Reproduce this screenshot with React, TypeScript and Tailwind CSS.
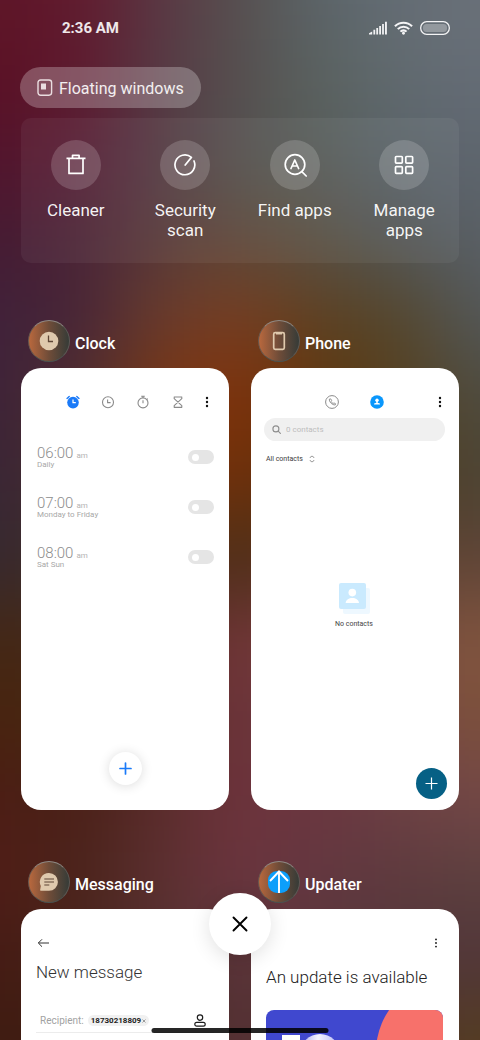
import type { ReactNode } from "react";

/* Wallpaper colour field: one row of samples every 80 units, seven across. */
const wallpaperRows: string[][] = [
  ["#5e1628", "#621a2e", "#5a3844", "#56504f", "#5b656a", "#656d75", "#6a7179"],
  ["#5a1024", "#5f1a2f", "#563944", "#55504f", "#5a625f", "#606a6f", "#656c76"],
  ["#52142c", "#581e37", "#523b44", "#54524f", "#575d5a", "#5a636a", "#5e656e"],
  ["#451a32", "#4b2537", "#583a3a", "#5e4838", "#595044", "#525758", "#5a6066"],
  ["#40223a", "#472538", "#6a3c2c", "#783d20", "#5c4020", "#54462c", "#535758"],
  ["#3d2238", "#50302f", "#7a3610", "#80300a", "#5f370c", "#56401f", "#4e4b3e"],
  ["#392636", "#4a2c2a", "#6a300f", "#72300a", "#55300f", "#503c20", "#4c4434"],
  ["#362a30", "#3f2c28", "#4c2e1c", "#4c2e18", "#54341c", "#5c4030", "#604538"],
  ["#452814", "#45281a", "#5a3028", "#74353a", "#744038", "#7c4c3e", "#82563f"],
  ["#48240f", "#48260f", "#5a2e26", "#6c333b", "#6c3a3e", "#784a3e", "#7c503c"],
  ["#4c1d15", "#4a2018", "#5a2c2c", "#6e333c", "#6a3540", "#6c4044", "#734748"],
  ["#501d17", "#4b241b", "#5c3031", "#6b353f", "#623840", "#5d3a3e", "#5c403e"],
  ["#451b14", "#46241a", "#523030", "#5a3439", "#58343a", "#54363a", "#50363a"],
  ["#3f1b10", "#402014", "#4c2c28", "#543034", "#543430", "#543a28", "#543c20"],
];

function Wallpaper() {
  return (
    <svg
      className="h-full w-full [grid-area:1/1]"
      viewBox="0 0 480 1040"
      preserveAspectRatio="none"
      aria-hidden="true"
    >
      <defs>
        <filter
          id="soft"
          filterUnits="userSpaceOnUse"
          x="-160"
          y="-160"
          width="800"
          height="1360"
          colorInterpolationFilters="sRGB"
        >
          <feGaussianBlur stdDeviation="38" />
        </filter>
      </defs>
      <g filter="url(#soft)">
        {wallpaperRows.map((row, r) =>
          row.map((fill, c) => {
            const left = c === 0 ? -160 : c * 80 - 40;
            const right = c === 6 ? 640 : c * 80 + 41;
            const top = r === 0 ? -160 : r * 80 - 40;
            const bottom = r === 13 ? 1200 : r * 80 + 41;
            return (
              <rect key={`${r}-${c}`} x={left} y={top} width={right - left} height={bottom - top} fill={fill} />
            );
          })
        )}
      </g>
    </svg>
  );
}

function StatusBar() {
  return (
    <header className="flex h-14 items-center justify-between pr-[9px] pl-[41px] text-white">
      <time className="text-[15px] font-bold text-white/90">2:36 AM</time>
      <div className="flex items-center gap-[7px]">
        <svg width="18" height="14" viewBox="0 0 18 14" fill="#f1f1f3" role="img" aria-label="Signal">
          <path d="M0 13.5V12.300l3.200-1.700v2.900zM4.400 8.800h1.800v4.700H4.400zM7.300 7h1.800v6.500H7.300zM10.200 5H12v8.500h-1.800zM13.100 3h1.800v10.500h-1.800zM16 .8h1.900v12.700H16z" />
        </svg>
        <svg width="19" height="14" viewBox="0 0 20 14" fill="none" stroke="#f4f4f5" strokeWidth="2.200" role="img" aria-label="Wi-Fi">
          <path d="M1 5.200a12.600 12.600 0 0 1 18 0" />
          <path d="M4 8.200a8.400 8.400 0 0 1 12 0" />
          <path d="M6.800 10.800a4.500 4.500 0 0 1 6.400 0" />
          <circle cx="10" cy="12.500" r="1.500" fill="#f4f4f5" stroke="none" />
        </svg>
        <svg width="30" height="14" viewBox="0 0 30 14" role="img" aria-label="Battery">
          <rect x=".7" y=".7" width="28.600" height="12.600" rx="6" fill="none" stroke="#f4f4f5" strokeWidth="1.300" />
          <rect x="3" y="3" width="24" height="8" rx="3.500" fill="#fff" opacity=".3" />
        </svg>
      </div>
    </header>
  );
}

function Tool({ label, children }: { label: string; children: ReactNode }) {
  return (
    <button className="flex flex-col items-center gap-2.5 px-4 text-[17px] leading-5 text-white/95">
      <span className="flex h-[50px] w-[50px] items-center justify-center rounded-full bg-white/17">
        <svg width="24" height="24" viewBox="0 0 24 24" fill="none" stroke="#fff" strokeWidth="1.700" aria-hidden="true">
          {children}
        </svg>
      </span>
      <span>{label}</span>
    </button>
  );
}

function Tools() {
  return (
    <nav className="grid h-[145px] grid-cols-4 items-start rounded-[10px] bg-white/5 pt-[22px]">
      <Tool label="Cleaner">
        <path d="M2.500 5.400h19M5 5.800v14.600h14V5.800M8.500 5V2.400h6.600V5" strokeLinejoin="round" />
      </Tool>
      <Tool label="Security scan">
        <path d="M21 8a9.900 9.900 0 1 1-2.600-3.600L12.200 12" strokeLinecap="round" strokeLinejoin="round" />
      </Tool>
      <Tool label="Find apps">
        <circle cx="12" cy="11.500" r="9.800" />
        <path d="m8 15.500 3.800-8.500 3.800 8.500M9.400 13h4.800M18.800 18.600l4.400 4.400" strokeLinecap="round" strokeLinejoin="round" />
      </Tool>
      <Tool label="Manage apps">
        <rect x="3.500" y="3.500" width="6.800" height="6.600" rx=".8" />
        <rect x="13.800" y="3.500" width="6.800" height="6.600" rx=".8" />
        <rect x="3.500" y="13.700" width="6.800" height="6.600" rx=".8" />
        <rect x="13.800" y="13.700" width="6.800" height="6.600" rx=".8" />
      </Tool>
    </nav>
  );
}

function AppWindow({ name, icon, children }: { name: string; icon: ReactNode; children: ReactNode }) {
  return (
    <section className="flex min-w-0 flex-col gap-1.5">
      <h2 className="flex items-center gap-[5px] pl-[7px] text-base font-medium text-white">
        <span className="flex h-[42px] w-[42px] items-center justify-center rounded-full border border-t-[#8f8984] border-r-[#5c5a56] border-b-[#4b5350] border-l-[#6a5a50] bg-linear-to-r from-[#b9683d] via-[#6f4c38] to-[#363b37]">
          <svg width="24" height="24" viewBox="0 0 24 24" aria-hidden="true">
            {icon}
          </svg>
        </span>
        <span className="pt-1.5">{name}</span>
      </h2>
      <div className="flex h-[442px] flex-col overflow-hidden rounded-[20px] bg-white">{children}</div>
    </section>
  );
}

function MoreButton({ small = false }: { small?: boolean }) {
  return (
    <button aria-label="More options">
      <svg width="6" height="14" viewBox="0 0 6 14" fill="#111" aria-hidden="true">
        <circle cx="3" cy={small ? 3.4 : 3} r={small ? 0.9 : 1.2} />
        <circle cx="3" cy="7" r={small ? 0.9 : 1.2} />
        <circle cx="3" cy={small ? 10.6 : 11} r={small ? 0.9 : 1.2} />
      </svg>
    </button>
  );
}

const alarms = [
  { time: "06:00", repeat: "Daily" },
  { time: "07:00", repeat: "Monday to Friday" },
  { time: "08:00", repeat: "Sat Sun" },
];

function ClockScreen() {
  return (
    <>
      <div className="mt-5 flex h-7 items-center justify-end gap-[19px] pr-[19px]">
        <div className="flex gap-[21px]">
          <button aria-label="Alarm">
            <svg width="14" height="14" viewBox="0 0 14 14" aria-hidden="true">
              <circle cx="7" cy="7.600" r="5.800" fill="#1a7af8" />
              <path d="M1 3.400 3.200 1.400M13 3.400l-2.200-2" stroke="#1a7af8" strokeWidth="1.400" strokeLinecap="round" />
              <path d="M7 4.600v3h2.800" fill="none" stroke="#fff" strokeWidth="1.200" />
            </svg>
          </button>
          <button aria-label="World clock">
            <svg width="14" height="14" viewBox="0 0 14 14" fill="none" stroke="#8a8a8a" strokeWidth="1.100" aria-hidden="true">
              <circle cx="7" cy="7.300" r="5.500" />
              <path d="M6.600 4.400v3.200h3" />
            </svg>
          </button>
          <button aria-label="Stopwatch">
            <svg width="14" height="14" viewBox="0 0 14 14" fill="none" stroke="#8a8a8a" strokeWidth="1.100" aria-hidden="true">
              <circle cx="7" cy="7.900" r="5" />
              <path d="M5.200 1.200h3.600M7 1.200V3M7 5.300v3M11 3.600l.8.8" />
            </svg>
          </button>
          <button aria-label="Timer">
            <svg width="14" height="14" viewBox="0 0 14 14" fill="none" stroke="#8a8a8a" strokeWidth="1.100" strokeLinejoin="round" aria-hidden="true">
              <path d="M2.800 2h8.400M2.800 12.400h8.400M3.200 2.200v1.500l7.600 7v1.500M10.800 2.200v1.500l-7.600 7v1.500" />
            </svg>
          </button>
        </div>
        <MoreButton />
      </div>
      <ul className="mt-4">
        {alarms.map((alarm) => (
          <li key={alarm.time}>
            <label className="flex h-[50px] items-center justify-between pr-[15px] pl-4 text-[8px] text-[#b3b3b3]">
              <span>
                <span className="flex h-4 items-baseline gap-[3px]">
                  <span className="text-[15px] leading-4 font-light text-[#8c8c8c]">{alarm.time}</span>
                  <span className="leading-2">am</span>
                </span>
                <span className="block leading-2 text-[#a8a8a8]">{alarm.repeat}</span>
              </span>
              <input
                type="checkbox"
                className="flex h-3.5 w-[26px] appearance-none items-center rounded-full bg-[#e5e5e5] pl-1 before:h-[7px] before:w-[7px] before:rounded-full before:bg-white checked:bg-[#1a7af8] checked:before:ml-[11px]"
              />
            </label>
          </li>
        ))}
      </ul>
      <button
        aria-label="Add alarm"
        className="mt-auto mb-[25px] flex h-[33px] w-[33px] items-center justify-center self-center rounded-full bg-white shadow-[0_1px_12px_rgba(0,0,0,0.14)]"
      >
        <svg width="13" height="13" viewBox="0 0 13 13" stroke="#1a7af8" strokeWidth="1.700" strokeLinecap="round" aria-hidden="true">
          <path d="M6.500 1v11M1 6.500h11" />
        </svg>
      </button>
    </>
  );
}

function PhoneScreen() {
  return (
    <>
      <div className="mt-5 flex h-7 items-center justify-end pr-4">
        <button aria-label="Recents" className="mr-[31px]">
          <svg width="14" height="14" viewBox="0 0 14 14" fill="none" stroke="#8b8b8b" aria-hidden="true">
            <circle cx="7" cy="7" r="6.400" />
            <path d="M4.400 4c-.5 2.800 2.600 6 5.800 6l.4-1.300-1.700-.8-.8.7c-1-.5-1.600-1.200-2-2l.6-.9-.9-1.800z" strokeWidth=".9" strokeLinejoin="round" />
          </svg>
        </button>
        <button aria-label="Contacts" className="mr-[53px]">
          <svg width="14" height="14" viewBox="0 0 14 14" aria-hidden="true">
            <circle cx="7" cy="7" r="6.800" fill="#0a97fc" />
            <circle cx="7" cy="5.300" r="1.700" fill="#fff" />
            <path d="M6.300 6h1.400v1.800l2.200.7v1H4.100v-1l2.200-.7z" fill="#fff" />
          </svg>
        </button>
        <MoreButton />
      </div>
      <label className="mt-0.5 mr-3.5 ml-[13px] flex h-[23px] items-center gap-[5px] rounded-full bg-[#f0f0f0] pl-2">
        <svg width="9" height="9" viewBox="0 0 9 9" fill="none" stroke="#8d8d8d" strokeWidth="1.100" aria-hidden="true">
          <circle cx="3.900" cy="3.900" r="3" />
          <path d="m6.200 6.200 2.200 2.200" strokeLinecap="round" />
        </svg>
        <input
          type="text"
          aria-label="Search contacts"
          placeholder="0 contacts"
          className="min-w-0 flex-1 bg-transparent text-[8px] outline-none placeholder:text-[#bdbdbd]"
        />
      </label>
      <button className="mt-3 ml-[15px] flex h-3 items-center gap-1.5 self-start text-[7px] leading-3 text-[#3c3c3c]">
        All contacts
        <svg width="6" height="8" viewBox="0 0 6 8" fill="none" stroke="#808080" strokeWidth=".8" aria-hidden="true">
          <path d="M1 3V2.500L3 1l2 1.500V3M1 5v.5L3 7l2-1.500V5" />
        </svg>
      </button>
      <div className="mt-[118px] flex flex-col items-center pr-0.5">
        <svg width="32" height="31" viewBox="0 0 32 31" aria-hidden="true">
          <rect x="5" y="5" width="27" height="26" rx="2" fill="#eef8ff" />
          <rect x="1" y="0" width="27" height="26" rx="2" fill="#caeafe" />
          <circle cx="14.300" cy="9.600" r="3.800" fill="#fff" />
          <path d="M7.600 20c.4-3.400 3.300-5 6.700-5s6.300 1.600 6.700 5z" fill="#fff" />
        </svg>
        <p className="mt-1 text-[7px] leading-3 text-[#444]">No contacts</p>
      </div>
      <button
        aria-label="Add contact"
        className="mt-auto mr-3 mb-[11px] flex h-[31px] w-[31px] items-center justify-center self-end rounded-full bg-[#066085]"
      >
        <svg width="13" height="13" viewBox="0 0 13 13" stroke="#fff" strokeWidth="1.200" aria-hidden="true">
          <path d="M6.500 .5v12M.5 6.500h12" />
        </svg>
      </button>
    </>
  );
}

function MessagingScreen() {
  return (
    <>
      <button aria-label="Back" className="mt-7 ml-4 self-start">
        <svg width="13" height="12" viewBox="0 0 13 12" fill="none" stroke="#333" aria-hidden="true">
          <path d="M5 2.300 1.300 6 5 9.700M1.500 6H12" />
        </svg>
      </button>
      <h3 className="mt-3 ml-[15px] text-[17px] leading-[22px] font-light text-[#333]">New message</h3>
      <div className="mx-[15px] mt-[26px] flex h-6 items-center border-b border-[#ececec] pl-1">
        <label htmlFor="recipient" className="text-[10px] text-[#a2a2a2]">
          Recipient:
        </label>
        <span className="ml-1 flex h-[11px] items-center gap-px rounded-full bg-[#f1f1f1] px-[3px] text-[8px] leading-[11px] font-bold text-[#222]">
          18730218809
          <button aria-label="Remove recipient">
            <svg width="4" height="4" viewBox="0 0 4 4" stroke="#777" strokeWidth=".7" aria-hidden="true">
              <path d="m.5.5 3 3M3.500.5l-3 3" />
            </svg>
          </button>
        </span>
        <input id="recipient" type="text" className="min-w-0 flex-1 text-[8px] outline-none" />
        <button aria-label="Choose contact" className="mr-2">
          <svg width="12" height="14" viewBox="0 0 12 14" fill="none" stroke="#1c1c1c" strokeWidth="1.200" aria-hidden="true">
            <circle cx="6" cy="3.600" r="2.700" />
            <rect x=".8" y="8.300" width="10.400" height="3.800" rx="1.900" />
          </svg>
        </button>
      </div>
    </>
  );
}

function UpdaterScreen() {
  return (
    <>
      <div className="mt-7 flex h-3 items-center justify-end pr-5">
        <MoreButton small />
      </div>
      <h3 className="mt-[17px] ml-[15px] text-[17px] leading-[22px] font-light whitespace-nowrap text-[#222]">
        An update is available
      </h3>
      <svg className="mt-[22px] mr-4 ml-[15px] rounded-lg" viewBox="0 0 177 120" aria-hidden="true">
        <defs>
          <linearGradient id="orb" x1="0" y1="0" x2="1" y2="0">
            <stop offset="0" stopColor="#a9a9f0" />
            <stop offset=".45" stopColor="#f4f4ff" />
            <stop offset="1" stopColor="#b4b6f4" />
          </linearGradient>
        </defs>
        <rect width="177" height="120" fill="#4048cf" />
        <circle cx="184" cy="42" r="74" fill="#f7716b" />
        <path d="M16 25h18v60H22V37h-6z" fill="#fff" />
        <circle cx="54" cy="44" r="20" fill="url(#orb)" />
      </svg>
    </>
  );
}

export default function App() {
  return (
    <div className="relative grid h-screen grid-cols-1 grid-rows-1 overflow-hidden bg-[#4c2822] font-['Roboto',sans-serif]">
      <Wallpaper />
      <main className="h-full min-h-0 overflow-hidden px-[21px] [grid-area:1/1]">
        <StatusBar />
        <button className="mt-[11px] -ml-px flex h-[41px] items-center gap-1.5 rounded-full bg-white/25 px-[17px] text-base text-white/90">
          <svg width="16" height="18" viewBox="0 0 16 18" aria-hidden="true">
            <rect x="1" y="1" width="13.600" height="15.200" rx="2.600" fill="none" stroke="#eadde0" strokeWidth="1.400" />
            <rect x="4" y="4.500" width="5" height="6" fill="#eadde0" />
          </svg>
          <span className="pt-0.5">Floating windows</span>
        </button>
        <div className="mt-2.5">
          <Tools />
        </div>
        <div className="mt-[57px] grid grid-cols-2 gap-x-[22px] gap-y-[51px]">
          <AppWindow
            name="Clock"
            icon={
              <>
                <circle cx="12" cy="12" r="9.300" fill="#dfc9ad" />
                <path d="M11.500 6.500v6h4.500" fill="none" stroke="#5e4636" strokeWidth="1.300" />
              </>
            }
          >
            <ClockScreen />
          </AppWindow>
          <AppWindow
            name="Phone"
            icon={
              <>
                <rect x="6.700" y="3.700" width="10.600" height="16.600" rx="1.500" fill="none" stroke="#dfc9ad" strokeWidth="1.700" />
                <path d="M9 3.500h6v2H9z" fill="#dfc9ad" />
              </>
            }
          >
            <PhoneScreen />
          </AppWindow>
          <AppWindow
            name="Messaging"
            icon={
              <>
                <path d="M12 3a8.900 8.900 0 1 1 0 17.800H4.100c-.9 0-1.100-.6-.9-1.300l.6-3.500A8.900 8.900 0 0 1 12 3z" fill="#dfc9ad" />
                <path d="M7.300 9h9.700M7.300 12H17M7.300 15h5" stroke="#5e4636" strokeWidth="1.200" />
              </>
            }
          >
            <MessagingScreen />
          </AppWindow>
          <AppWindow
            name="Updater"
            icon={
              <>
                <rect x="1" y="1" width="22" height="22" rx="9" fill="#0c9ffb" />
                <path d="M12 23V2M3 11l9-9.500 9 9.500" fill="none" stroke="#fff" strokeWidth="1.900" />
              </>
            }
          >
            <UpdaterScreen />
          </AppWindow>
        </div>
      </main>
      <button
        aria-label="Close all"
        className="absolute bottom-[85px] left-1/2 flex h-[62px] w-[62px] -translate-x-1/2 items-center justify-center rounded-full bg-white shadow-[0_4px_20px_rgba(0,0,0,0.12)]"
      >
        <svg width="16" height="16" viewBox="0 0 16 16" stroke="#000" strokeWidth="1.900" strokeLinecap="round" aria-hidden="true">
          <path d="m1.500 1.500 13 13M14.500 1.500l-13 13" />
        </svg>
      </button>
      <div className="absolute bottom-[7px] left-1/2 h-[5px] w-[177px] -translate-x-1/2 rounded-full bg-black/85" />
    </div>
  );
}
